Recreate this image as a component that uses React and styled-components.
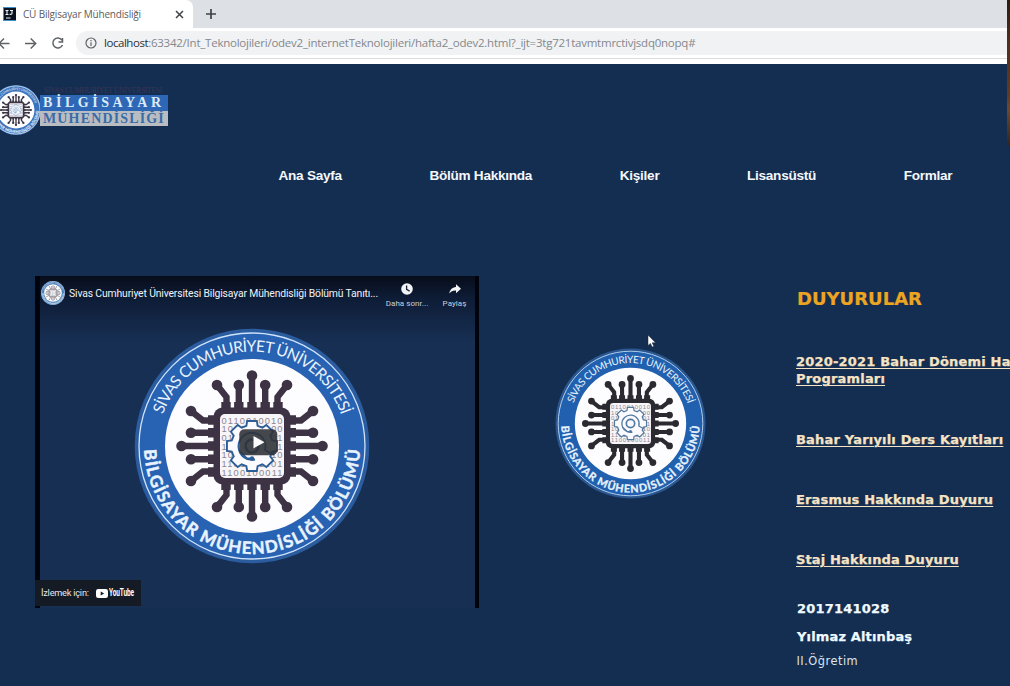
import React from "react";
import styled, { createGlobalStyle } from "styled-components";

const GlobalStyle = createGlobalStyle`
  * { box-sizing: border-box; }
  html, body { margin: 0; padding: 0; overflow: hidden; background: #142e52; }
  svg { display: block; flex: none; }
`;

const Screen = styled.div`
  position: relative;
  width: 1010px;
  height: 686px;
  overflow: hidden;
  display: flex;
  flex-direction: column;
  background: #142e52;
`;

/* Browser frame */
const TabStrip = styled.div`
  height: 28px;
  flex: none;
  display: flex;
  align-items: center;
  background: #dde0e5;
`;
const Tab = styled.div`
  width: 193px;
  height: 28px;
  padding: 0 9px 0 3px;
  display: flex;
  align-items: center;
  border-radius: 0 7px 0 0;
  background: #fff;
`;
const TabTitle = styled.span`
  flex: 1;
  margin-left: 7px;
  font: 10px/14px "Open Sans", "Noto Sans", sans-serif;
  letter-spacing: ${(p) => p.$spacing}px;
  color: #5b5d61;
  white-space: nowrap;
`;
const NewTab = styled.div`
  margin-left: 12px;
`;
const Toolbar = styled.div`
  height: 31px;
  flex: none;
  display: flex;
  align-items: center;
  background: #fff;
  border-bottom: 1px solid #d9dbde;
`;
const NavButtons = styled.div`
  width: 76px;
  flex: none;
  display: flex;
  align-items: center;
  gap: 13px;
  margin-left: -3px;
`;
const AddressBar = styled.div`
  flex: 1;
  height: 24px;
  margin-left: 3px;
  padding-left: 9px;
  display: flex;
  align-items: center;
  border-radius: 12px 0 0 12px;
  background: #f0f2f4;
`;
const Address = styled.span`
  margin-left: 7px;
  font: 11.5px/16px "Open Sans", "Noto Sans", sans-serif;
  letter-spacing: ${(p) => p.$spacing}px;
  color: #85888c;
  white-space: nowrap;
`;
const Host = styled.span`
  letter-spacing: -0.45px;
  color: #2f3134;
`;
const BookmarkGap = styled.div`
  height: 5px;
  flex: none;
  background: #fff;
`;
const SideStrip = styled.div`
  position: absolute;
  top: 0;
  right: 0;
  width: 3px;
  height: 146px;
  background: linear-gradient(#2b1a12, #50301b 30%, #5f3c20 65%, #6b4a2a 75%, #2d2424);
`;

/* Page */
const Header = styled.header`
  height: 92px;
  padding-top: 21px;
  flex: none;
  display: flex;
  align-items: flex-start;
  margin-left: -9px;
`;
const Wordmark = styled.div`
  width: 128px;
  margin-left: -1px;
  padding-top: 2px;
  font-family: "Liberation Serif", serif;
  white-space: nowrap;
`;
const WordTop = styled.div`
  height: 8px;
  padding-left: 4px;
  font-size: 7.5px;
  line-height: 8px;
  letter-spacing: -0.25px;
  color: #3b3552;
`;
const WordLine = styled.div`
  height: ${(p) => p.$h}px;
  padding-left: 3px;
  font-weight: bold;
  font-size: 14px;
  line-height: 16px;
  letter-spacing: ${(p) => p.$spacing}px;
  background: ${(p) => p.$bg};
  color: ${(p) => p.$fg};
`;
const Menu = styled.nav`
  height: 40px;
  flex: none;
  display: flex;
  align-items: center;
  gap: 87.6px;
  padding: 0 0 0 278.5px;
`;
const MenuItem = styled.span`
  font: bold 13.6px/18px "Liberation Sans", Arial, sans-serif;
  letter-spacing: -0.27px;
  color: #f4f8fb;
  white-space: nowrap;
`;
const Content = styled.main`
  flex: 1;
  display: grid;
  grid-template-columns: 445px 151px 300px;
  column-gap: 0;
  padding: 80px 0 0 35px;
`;
const Video = styled.section`
  width: 444px;
  height: 332px;
  display: flex;
  flex-direction: column;
  border: solid #01040c;
  border-width: 0 4px 0 5px;
  background: linear-gradient(#070d1a, #0e1c36 22px, #172f53 65px, #172f53);
`;
const VideoBar = styled.div`
  height: 42px;
  padding: 5px 0 0 1px;
  display: flex;
  align-items: flex-start;
`;
const VideoTitle = styled.div`
  width: 312px;
  margin: 5.5px 0 0 4px;
  font: 10.4px/14px Roboto, sans-serif;
  letter-spacing: ${(p) => p.$spacing}px;
  color: #f0f3f6;
  white-space: nowrap;
`;
const VideoAction = styled.div`
  width: ${(p) => p.$w}px;
  margin-left: ${(p) => p.$gap}px;
  padding-top: 2px;
  display: flex;
  flex-direction: column;
  align-items: center;
  gap: 3.5px;
  font: 8px/10px Roboto, sans-serif;
  letter-spacing: 0.05px;
  color: #c9d0da;
  white-space: nowrap;
`;
const Poster = styled.div`
  height: 262px;
  display: flex;
  justify-content: center;
  padding-top: 10px;
  margin-left: -12px;
`;
const WatchOn = styled.div`
  width: 106px;
  height: 26px;
  margin-left: -5px;
  padding-left: 6px;
  display: flex;
  align-items: center;
  gap: 7px;
  background: #151b25;
  font: 9.2px/12px Roboto, sans-serif;
  letter-spacing: -0.22px;
  color: #e6e8ea;
  white-space: nowrap;
`;
const YouTube = styled.span`
  display: flex;
  align-items: center;
  gap: 1px;
  color: #fff;
`;
const YouTubeName = styled.b`
  font: bold 10px/12px Roboto, sans-serif;
  letter-spacing: -0.2px;
  width: 25px;
  transform: scaleX(0.65);
  transform-origin: left;
`;
const Badge = styled.div`
  margin: 72px 0 0 74.5px;
`;
const News = styled.aside`
  margin: 13px 0 0 166px;
  width: 280px;
  font-family: Verdana, "DejaVu Sans", sans-serif;
`;
const NewsTitle = styled.h2`
  margin: 0 0 44px;
  font-size: 18px;
  line-height: 20px;
  letter-spacing: 0;
  -webkit-text-stroke: 0.2px #eca421;
  color: #eca421;
`;
const NewsLink = styled.a`
  display: block;
  margin: 0 0 ${(p) => p.$after ?? 43}px -1px;
  font-weight: bold;
  font-size: 13px;
  line-height: 17px;
  letter-spacing: ${(p) => p.$spacing}px;
  -webkit-text-stroke: 0.25px #f6e3c4;
  text-decoration: underline;
  text-decoration-thickness: 1px;
  text-underline-offset: 2px;
  color: #f6e3c4;
  white-space: nowrap;
`;
const Signature = styled.div`
  font-weight: ${(p) => (p.$light ? "normal" : "bold")};
  font-size: ${(p) => (p.$light ? 11.4 : 13)}px;
  line-height: 17px;
  margin: ${(p) => p.$top}px 0 0 ${(p) => (p.$light ? -0.5 : 0)}px;
  letter-spacing: ${(p) => p.$spacing}px;
  -webkit-text-stroke: ${(p) => (p.$light ? 0 : 0.25)}px #f0fbff;
  color: ${(p) => (p.$light ? "#dbe4ec" : "#f0fbff")};
`;
const Cursor = styled.svg`
  position: absolute;
  left: 647px;
  top: 334px;
`;

const BITS = ["0110010010", "1001010100", "0110101001", "1010010101", "1001010010", "1101001101", "1100100011"];

const gearPath = (() => {
  const pts = [];
  const teeth = 8;
  for (let i = 0; i < teeth; i++) {
    [[-0.27, 21], [-0.19, 25.5], [0.19, 25.5], [0.27, 21]].forEach(([d, r]) => {
      const a = (i / teeth) * Math.PI * 2 + d;
      pts.push(`${(Math.cos(a) * r).toFixed(2)} ${(Math.sin(a) * r).toFixed(2)}`);
    });
  }
  return `M${pts.join("L")}Z`;
})();

function Emblem({ id, size, ink, gear, blue = "#2862b2", rim = "#2b5c9f", play, tiny }) {
  return (
    <svg width={size} height={size} viewBox="-118 -118 236 236">
      <defs>
        <path id={`${id}-top`} d="M-94.5 0A94.5 94.5 0 0 1 94.5 0" />
        <path id={`${id}-bottom`} d="M-108 0A108 108 0 0 0 108 0" />
      </defs>
      <circle r="117.3" fill={rim} />
      <circle r="113" fill={blue} stroke="#cfe4fb" strokeWidth={tiny ? 3 : 1.3} />
      <circle r="87" fill="#fdfdff" />
      <g fill="#e8f3ff" fontFamily='"Lato", sans-serif'>
        <text fontSize="15.8">
          <textPath href={`#${id}-top`} startOffset="32" textLength="233" lengthAdjust="spacing">
            SİVAS CUMHURİYET ÜNİVERSİTESİ
          </textPath>
        </text>
        <text fontSize="16.8" fontWeight="bold" stroke="#e8f3ff" strokeWidth="0.5">
          <textPath href={`#${id}-bottom`} startOffset="4" textLength="331" lengthAdjust="spacing">
            BİLGİSAYAR MÜHENDİSLİĞİ BÖLÜMÜ
          </textPath>
        </text>
      </g>
      {[0, 90, 180, 270].map((r) => (
        <g key={r} transform={`rotate(${r})`} stroke={ink} fill="none">
          <path d="M0-70V-34M-13.2-61V-34M13.2-61V-34M-35-61L-25.5-49V-34M35-61L25.5-49V-34" strokeWidth="6.4" />
          <path d="M0-44V-34M-13.2-44V-34M13.2-44V-34M-26-44V-34M26-44V-34" strokeWidth="9.4" />
          <g fill={ink} stroke="none">
            <circle cy="-70.5" r="5.3" />
            <circle cx="-13.2" cy="-61" r="5.3" />
            <circle cx="13.2" cy="-61" r="5.3" />
            <circle cx="-35" cy="-61" r="5.3" />
            <circle cx="35" cy="-61" r="5.3" />
          </g>
        </g>
      ))}
      <rect x="-38.5" y="-38.5" width="77" height="77" rx="9" fill={ink} />
      <rect x="-32" y="-32" width="64" height="64" rx="5" fill="#f7f5f8" />
      <g fill="#8d8790" fontSize="9.3" fontFamily='"Liberation Sans", sans-serif'>
        {BITS.map((row, i) => (
          <text key={i} x="-30.5" y={-22.3 + i * 8.65} textLength="61">
            {row}
          </text>
        ))}
      </g>
      <g fill="none" stroke={gear} strokeWidth="1.9">
        <path d={gearPath} fill="#fbfaff" />
        <path d="M3 13.5A13.5 13.5 0 1 1 13 4L22 9" />
        <circle r="6.5" strokeWidth="2.6" />
        <path d="M0 12.5H-5L-12 6" />
        <circle cy="12.5" r="2.2" fill={gear} stroke="none" />
      </g>
      {play && (
        <g>
          <rect x="-12.7" y="-16.8" width="38" height="26" rx="5" fill="#303338" fillOpacity="0.9" />
          <path d="M1.5-10V2.4L12.5-3.8Z" fill="#fff" />
        </g>
      )}
    </svg>
  );
}

const Stroke = ({ w, h, box, d, width = 1.5, color = "#5f6368" }) => (
  <svg width={w} height={h} viewBox={box} fill="none" stroke={color} strokeWidth={width}>
    <path d={d} />
  </svg>
);

export default function App() {
  return (
    <Screen>
      <GlobalStyle />
      <TabStrip>
        <Tab>
          <svg width="13" height="14" viewBox="0 0 13 14">
            <rect width="13" height="14" fill="#3e91c9" />
            <rect x="1" y="1" width="12" height="12" fill="#0b1320" />
            <path d="M2.5 3.5H5.5M4 3.5V7.5M2.5 7.5H5.5M7 3.5H10M9 3.5V6.5Q9 7.5 6.5 7.3M3 11H7.5" fill="none" stroke="#f3f6f8" strokeWidth="1.1" />
          </svg>
          <TabTitle $spacing={-0.18}>CÜ Bilgisayar Mühendisliği</TabTitle>
          <Stroke w={9} h={9} box="0 0 9 9" d="M1 1L8 8M8 1L1 8" color="#3f4246" />
        </Tab>
        <NewTab>
          <Stroke w={12} h={12} box="0 0 12 12" d="M6 1V11M1 6H11" color="#3f4246" width={1.7} />
        </NewTab>
      </TabStrip>
      <Toolbar>
        <NavButtons>
          <Stroke w={13} h={13} box="0 0 13 13" d="M12.5 6.5H2M7 1.5L2 6.5L7 11.5" />
          <Stroke w={15} h={13} box="0 0 15 13" d="M2 6.5H12.5M7.7 1.5L12.7 6.5L7.7 11.5" />
          <Stroke w={15} h={13} box="0 0 15 13" d="M10.9 3A5 5 0 1 0 11.5 8M11.5 1V5H7.5" />
        </NavButtons>
        <AddressBar>
          <svg width="12" height="12" viewBox="0 0 12 12" fill="none" stroke="#5f6368" strokeWidth="1.2">
            <circle cx="6" cy="6" r="5" />
            <path d="M6 5.2V9M6 3V4.3" />
          </svg>
          <Address $spacing={-0.235}>
            <Host>localhost</Host>:63342/Int_Teknolojileri/odev2_internetTeknolojileri/hafta2_odev2.html?_ijt=3tg721tavmtmrctivjsdq0nopq#
          </Address>
        </AddressBar>
      </Toolbar>
      <BookmarkGap />
      <Header>
        <Emblem id="brand" size={50} ink="#3b3544" gear="#5887bd" blue="#3a72bb" rim="#7faee0" tiny />
        <Wordmark>
          <WordTop>SİVAS CUMHURİYET ÜNİVERSİTESİ</WordTop>
          <WordLine $h={16} $bg="#2e67b5" $fg="#dcebf7" $spacing={3.55}>BİLGİSAYAR</WordLine>
          <WordLine $h={15} $bg="#b9bdc1" $fg="#396ba8" $spacing={1.15}>MÜHENDİSLİĞİ</WordLine>
        </Wordmark>
      </Header>
      <Menu>
        {["Ana Sayfa", "Bölüm Hakkında", "Kişiler", "Lisansüstü", "Formlar"].map((t) => (
          <MenuItem key={t}>{t}</MenuItem>
        ))}
      </Menu>
      <Content>
        <Video>
          <VideoBar>
            <Emblem id="channel" size={24} ink="#8a8388" gear="#8d9cb0" blue="#4c80b8" rim="#8fb6dc" tiny />
            <VideoTitle $spacing={-0.15}>Sivas Cumhuriyet Üniversitesi Bilgisayar Mühendisliği Bölümü Tanıtı...</VideoTitle>
            <VideoAction $w={44} $gap={4}>
              <svg width="12" height="12" viewBox="0 0 12 12">
                <circle cx="6" cy="6" r="5.8" fill="#f2f4f6" />
                <path d="M5.6 2.5V6.4L8.6 8.1" fill="none" stroke="#18243a" strokeWidth="1.3" />
              </svg>
              Daha sonr...
            </VideoAction>
            <VideoAction $w={26} $gap={12.5}>
              <svg width="12" height="12" viewBox="0 0 12 12">
                <path d="M7 1.2L12 5.8L7 10.3V7.4C4 7.2 2 8.2.3 10.4C.9 7 3 4.5 7 4.1Z" fill="#f2f4f6" />
              </svg>
              Paylaş
            </VideoAction>
          </VideoBar>
          <Poster>
            <Emblem id="poster" size={236} ink="#3d3344" gear="#2d5d96" play />
          </Poster>
          <WatchOn>
            İzlemek için:
            <YouTube>
              <svg width="12" height="9" viewBox="0 0 12 9">
                <rect width="12" height="9" rx="2.3" fill="#fff" />
                <path d="M4.7 2.4V6.6L8.2 4.5Z" fill="#151b25" />
              </svg>
              <YouTubeName>YouTube</YouTubeName>
            </YouTube>
          </WatchOn>
        </Video>
        <Badge>
          <Emblem id="badge" size={151} ink="#2c2a31" gear="#53799f" blue="#2060ae" rim="#2a578f" />
        </Badge>
        <News>
          <NewsTitle>DUYURULAR</NewsTitle>
          <NewsLink $spacing={0.19} $after={44}>2020-2021 Bahar Dönemi Ha<br />Programları</NewsLink>
          <NewsLink $spacing={0.19}>Bahar Yarıyılı Ders Kayıtları</NewsLink>
          <NewsLink $spacing={0.16}>Erasmus Hakkında Duyuru</NewsLink>
          <NewsLink $spacing={0.14}>Staj Hakkında Duyuru</NewsLink>
          <Signature $top={-11} $spacing={0.2}>2017141028</Signature>
          <Signature $top={11} $spacing={0.15}>Yılmaz Altınbaş</Signature>
          <Signature $light $top={8} $spacing={0.5}>II.Öğretim</Signature>
        </News>
      </Content>
      <SideStrip />
      <Cursor width="10" height="15" viewBox="0 0 10 15">
        <path d="M1 1V11.5L3.4 9.4L5.2 13L6.9 12.2L5.2 8.8H8.6Z" fill="#fff" stroke="#18202c" strokeWidth="0.5" />
      </Cursor>
    </Screen>
  );
}
